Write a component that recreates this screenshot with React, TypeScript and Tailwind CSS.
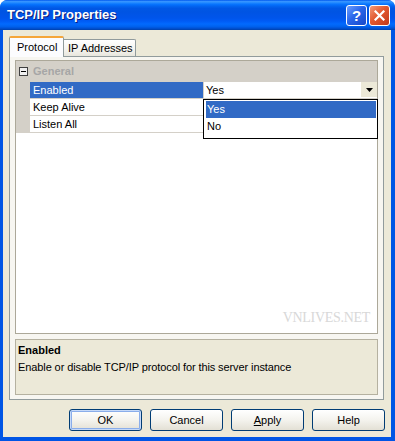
import React from "react";

type Row = { name: string; value: string; selected?: boolean };

const rows: Row[] = [
  { name: "Enabled", value: "Yes", selected: true },
  { name: "Keep Alive", value: "" },
  { name: "Listen All", value: "" },
];

const buttons = ["OK", "Cancel", "Apply", "Help"];

function TitleBar() {
  return (
    <div className="h-[30px] flex items-center pl-[7px] pr-[5px] rounded-t-[7px] bg-[linear-gradient(180deg,#0058EE_0%,#3593FF_5%,#288EFF_8%,#127DFF_12%,#036FFC_16%,#0262EE_22%,#0057E5_28%,#0054E3_40%,#0055EB_60%,#005BF5_70%,#026AFE_80%,#0062EF_88%,#0052D6_94%,#0040AB_100%)]">
      <span className="flex-1 text-white font-bold text-[13px] font-['Liberation_Sans',Arial,sans-serif] [text-shadow:1px_1px_0_#0A1E80]">
        TCP/IP Properties
      </span>
      <div className="flex gap-[2px]">
        <div className="w-[21px] h-[21px] rounded-[3px] border border-white flex items-center justify-center bg-[linear-gradient(135deg,#6C9EFF_0%,#2A66EA_45%,#1747C8_100%)] text-white font-bold text-[15px] leading-none font-['Liberation_Sans',Arial,sans-serif]">
          ?
        </div>
        <div className="w-[21px] h-[21px] rounded-[3px] border border-white flex items-center justify-center bg-[linear-gradient(135deg,#F29A7A_0%,#E2582F_45%,#C2391A_100%)]">
          <svg width="11" height="11" viewBox="0 0 11 11">
            <path d="M1.5 1.5 L9.5 9.5 M9.5 1.5 L1.5 9.5" stroke="white" strokeWidth="2.2" strokeLinecap="square" />
          </svg>
        </div>
      </div>
    </div>
  );
}

function Tabs() {
  return (
    <div className="h-[20px] flex items-end relative z-10">
      <div className="w-[55px] h-[21px] -mb-[1px] bg-[#FCFCFE] border-x border-[#919B9C] border-t-[2px] border-t-[#F5A63A] rounded-t-[2px] pl-[7px] pt-[2px] text-[11px] leading-[14px]">
        Protocol
      </div>
      <div className="w-[72px] h-[17px] bg-[linear-gradient(180deg,#FFFFFF_0%,#F4F3EE_60%,#E8E6DD_100%)] border-t border-r border-[#919B9C] rounded-tr-[2px] pl-[4px] pt-[2px] text-[11px] leading-[13px]">
        IP Addresses
      </div>
    </div>
  );
}

function PropertyGrid() {
  return (
    <div className="relative h-[274px] bg-white border border-[#ACA899]">
      <div className="h-[21px] flex items-center bg-[#D4D0C8]">
        <div className="w-[14px] flex justify-center">
          <div className="w-[9px] h-[9px] border border-[#404040] bg-[#F0F0F0] flex items-center justify-center">
            <div className="w-[5px] h-[1px] bg-black" />
          </div>
        </div>
        <span className="pl-[3px] text-[11px] font-bold text-[#A6A6A6]">General</span>
      </div>
      {rows.map((row, i) => (
        <div key={i} className="flex h-[17px] text-[11px]">
          <div className="w-[14px] bg-[#D4D0C8]" />
          <div
            className={
              row.selected
                ? "w-[174px] border-b border-r border-[#D4D0C8] bg-[#316AC5] text-white pl-[3px] leading-[16px]"
                : "w-[174px] border-b border-r border-[#D4D0C8] pl-[3px] leading-[16px]"
            }
          >
            {row.name}
          </div>
          <div className="flex-1 flex border-b border-[#D4D0C8]">
            <span className="flex-1 pl-[2px] leading-[16px]">{row.value}</span>
            {row.selected && (
              <div className="w-[16px] h-[15px] bg-[#ECE9D8] flex items-center justify-center">
                <svg width="7" height="4" viewBox="0 0 7 4">
                  <path d="M0 0 H7 L3.5 4 Z" fill="black" />
                </svg>
              </div>
            )}
          </div>
        </div>
      ))}

      <div className="absolute left-[187px] top-[38px] w-[175px] h-[40px] bg-white border border-black pt-[1px] pl-[2px] pr-[1px] text-[11px]">
        <div className="h-[17px] bg-[#316AC5] text-white pl-[1px] leading-[17px]">Yes</div>
        <div className="h-[17px] pl-[1px] leading-[17px]">No</div>
      </div>

      <span className="absolute right-[7px] bottom-[5px] font-['Liberation_Serif','Times_New_Roman',serif] text-[14px] text-[#D8D8D8] tracking-[-0.3px]">
        VNLIVES.NET
      </span>
    </div>
  );
}

function Description() {
  return (
    <div className="h-[56px] border border-[#B5B1A0] bg-[#ECE9D8] pl-[2px] pt-[2px] text-[11px] leading-[16px]">
      <div className="font-bold">Enabled</div>
      <div className="mt-[1px] tracking-[-0.1px]">Enable or disable TCP/IP protocol for this server instance</div>
    </div>
  );
}

export default function App() {
  return (
    <div className="w-[395px] h-[441px] bg-[#0055E5] rounded-t-[8px] flex flex-col text-black font-['Liberation_Sans',Arial,sans-serif]">
      <TitleBar />
      <div className="flex-1 ml-[3px] mr-[4px] mb-[4px] bg-[#ECE9D8] flex flex-col pl-[6px] pr-[7px] pt-[6px]">
        <Tabs />
        <div className="h-[344px] border border-[#919B9C] bg-[#F7F6F1] px-[5px] pt-[3px] flex flex-col gap-[5px]">
          <PropertyGrid />
          <Description />
        </div>
        <div className="mt-[9px] flex justify-end gap-[8px] -mr-[1px]">
          {buttons.map((b, i) => (
            <div
              key={b}
              className={
                i === 0
                  ? "w-[73px] h-[22px] rounded-[3px] border border-[#003C74] bg-[linear-gradient(180deg,#FFFFFF_0%,#F4F3EE_50%,#E3E0D5_100%)] shadow-[inset_0_0_0_1px_#C5D9F9,inset_0_0_0_2px_#8AADEA] flex items-center justify-center text-[11px]"
                  : "w-[73px] h-[22px] rounded-[3px] border border-[#003C74] bg-[linear-gradient(180deg,#FFFFFF_0%,#F4F3EE_50%,#E3E0D5_100%)] flex items-center justify-center text-[11px]"
              }
            >
              {b === "Apply" ? (
                <span>
                  <span className="underline">A</span>pply
                </span>
              ) : (
                b
              )}
            </div>
          ))}
        </div>
      </div>
    </div>
  );
}
